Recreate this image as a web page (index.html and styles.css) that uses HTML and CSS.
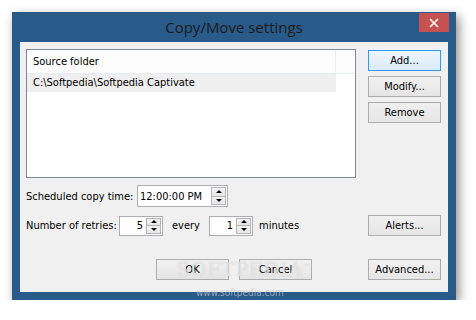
FILE: index.html
```html
<!DOCTYPE html>
<html lang="en">
    <head>
        <meta charset="UTF-8">
        <title>Copy/Move settings</title>
        <link rel="stylesheet" href="styles.css">
    </head>
    <body>
        <div class="window">
            <!-- Barre de titre -->
            <div class="titlebar">
                <span></span>
                <span class="title">Copy/Move settings</span>
                <span class="close">
                    <svg width="10" height="10" viewBox="0 0 10 10"><path d="M1 1 L9 9 M9 1 L1 9" stroke="#fff" stroke-width="1.6" fill="none"/></svg>
                </span>
            </div>
            <!-- Zone client -->
            <div class="client">
                <div class="top">
                    <div class="listbox">
                        <div class="lv-header">
                            <div class="lv-col">Source folder</div>
                            <div class="lv-rest"></div>
                        </div>
                        <div class="lv-row selected">C:\Softpedia\Softpedia Captivate</div>
                    </div>
                    <div class="side-buttons">
                        <button class="btn default">Add...</button>
                        <button class="btn">Modify...</button>
                        <button class="btn">Remove</button>
                    </div>
                </div>

                <div class="row time-row">
                    <span class="label time-label">Scheduled copy time:</span>
                    <div class="spin time-spin">
                        <span class="spin-value">12:00:00 PM</span>
                        <span class="updown"><span class="ud up"></span><span class="ud down"></span></span>
                    </div>
                </div>

                <div class="row retry-row">
                    <span class="label retry-label">Number of retries:</span>
                    <div class="spin num-spin">
                        <span class="spin-value num">5</span>
                        <span class="updown"><span class="ud up"></span><span class="ud down"></span></span>
                    </div>
                    <span class="label every">every</span>
                    <div class="spin num-spin">
                        <span class="spin-value num">1</span>
                        <span class="updown"><span class="ud up"></span><span class="ud down"></span></span>
                    </div>
                    <span class="label minutes">minutes</span>
                    <button class="btn push-right">Alerts...</button>
                </div>

                <div class="row bottom-row">
                    <button class="btn ok">OK</button>
                    <button class="btn">Cancel</button>
                    <button class="btn push-right">Advanced...</button>
                </div>
            </div>
            <!-- Filigrane -->
            <span class="wm-logo">SOFTPEDIA<sup>™</sup></span>
            <span class="wm-url">www.softpedia.com</span>
        </div>
    </body>
</html>
```

FILE: styles.css
```css
/* Style global */
body, html {
    margin: 0;
    padding: 0;
    background-color: #ffffff;
    font-family: 'DejaVu Sans Condensed', 'DejaVu Sans', sans-serif;
    font-size: 11px;
    color: #000000;
    overflow: hidden;
}

/* Fenêtre */
.window {
    position: relative;
    margin: 12px 0 0 12px;
    width: 444px;
    height: 288px;
    background-color: #285a8a;
    box-shadow: 3px 4px 10px rgba(0, 0, 0, 0.45);
    box-sizing: border-box;
}

.titlebar {
    height: 30px;
    display: grid;
    grid-template-columns: 1fr auto 1fr;
    align-items: center;
}

.title {
    font-family: 'Open Sans', 'Noto Sans', sans-serif;
    font-size: 15px;
    color: #1c1c1c;
}

.close {
    justify-self: end;
    align-self: start;
    margin: 1px 7px 0 0;
    width: 30px;
    height: 19px;
    background-color: #c75050;
    display: flex;
    align-items: center;
    justify-content: center;
}

.client {
    margin: 0 8px;
    height: 250px;
    background-color: #f0f0f0;
    padding: 7px 7px 0 6px;
    box-sizing: border-box;
    display: flex;
    flex-direction: column;
}

/* Liste des dossiers */
.top {
    display: flex;
    gap: 12px;
    height: 129px;
}

.listbox {
    width: 330px;
    height: 129px;
    box-sizing: border-box;
    border: 1px solid #828790;
    background-color: #ffffff;
}

.lv-header {
    display: flex;
    height: 24px;
    background-color: #fcfcfc;
    border-bottom: 1px solid #e3ebf7;
    box-sizing: border-box;
}

.lv-col {
    width: 309px;
    padding-left: 6px;
    line-height: 24px;
    border-right: 1px solid #eaeef5;
    box-sizing: border-box;
}

.lv-rest {
    flex-grow: 1;
}

.lv-row {
    width: 309px;
    height: 18px;
    line-height: 18px;
    padding-left: 6px;
    box-sizing: border-box;
}

.lv-row.selected {
    background-color: #efefef;
}

.side-buttons {
    width: 73px;
    display: flex;
    flex-direction: column;
    gap: 5px;
    margin-top: 1px;
}

/* Boutons */
.btn {
    width: 73px;
    height: 21px;
    padding: 0;
    font-family: 'DejaVu Sans Condensed', 'DejaVu Sans', sans-serif;
    font-size: 11px;
    color: #000000;
    background: linear-gradient(#f0f0f0, #e5e5e5);
    border: 1px solid #acacac;
    border-radius: 0;
    box-sizing: border-box;
}

.btn.default {
    border-color: #3399ff;
    background: linear-gradient(#ecf4fc, #dcecfc);
}

.push-right {
    margin-left: auto;
}

/* Lignes de réglages */
.row {
    display: flex;
    align-items: center;
}

.time-row {
    margin-top: 7px;
    height: 22px;
}

.retry-row {
    margin-top: 8px;
    height: 21px;
}

.bottom-row {
    margin-top: 23px;
    gap: 10px;
}

.label {
    white-space: nowrap;
}

.time-label {
    width: 111px;
}

.retry-label {
    width: 93px;
}

.every {
    width: 46px;
    padding-left: 9px;
    box-sizing: border-box;
}

.minutes {
    margin-left: 6px;
}

.ok {
    margin-left: 130px;
}

/* Champs à flèches */
.spin {
    display: flex;
    background-color: #ffffff;
    border: 1px solid #abadb3;
    box-sizing: border-box;
}

.time-spin {
    width: 91px;
    height: 22px;
}

.num-spin {
    width: 44px;
    height: 20px;
}

.spin-value {
    flex-grow: 1;
    padding-left: 2px;
    display: flex;
    align-items: center;
}

.spin-value.num {
    justify-content: flex-end;
    padding: 0 3px 0 0;
}

.updown {
    width: 15px;
    margin: 1px 1px 1px 0;
    display: flex;
    flex-direction: column;
    border: 1px solid #b4b4b4;
    box-sizing: border-box;
}

.ud {
    flex-grow: 1;
    display: flex;
    align-items: center;
    justify-content: center;
    background: linear-gradient(#f2f2f2, #e6e6e6);
}

.ud.down {
    border-top: 1px solid #b4b4b4;
}

.ud.up::after {
    content: '';
    border-left: 3px solid transparent;
    border-right: 3px solid transparent;
    border-bottom: 3px solid #000000;
}

.ud.down::after {
    content: '';
    border-left: 3px solid transparent;
    border-right: 3px solid transparent;
    border-top: 3px solid #000000;
}

/* Filigrane */
.wm-logo {
    position: absolute;
    left: 165px;
    top: 246px;
    font-family: 'DejaVu Serif', serif;
    font-size: 19px;
    letter-spacing: 1px;
    color: rgba(255, 255, 255, 0.6);
    text-shadow: 0 0 1px rgba(130, 130, 130, 0.45);
    pointer-events: none;
}

.wm-logo sup {
    font-size: 7px;
}

.wm-url {
    position: absolute;
    left: 184px;
    top: 275px;
    font-size: 10px;
    color: rgba(200, 200, 200, 0.7);
    pointer-events: none;
}
```
